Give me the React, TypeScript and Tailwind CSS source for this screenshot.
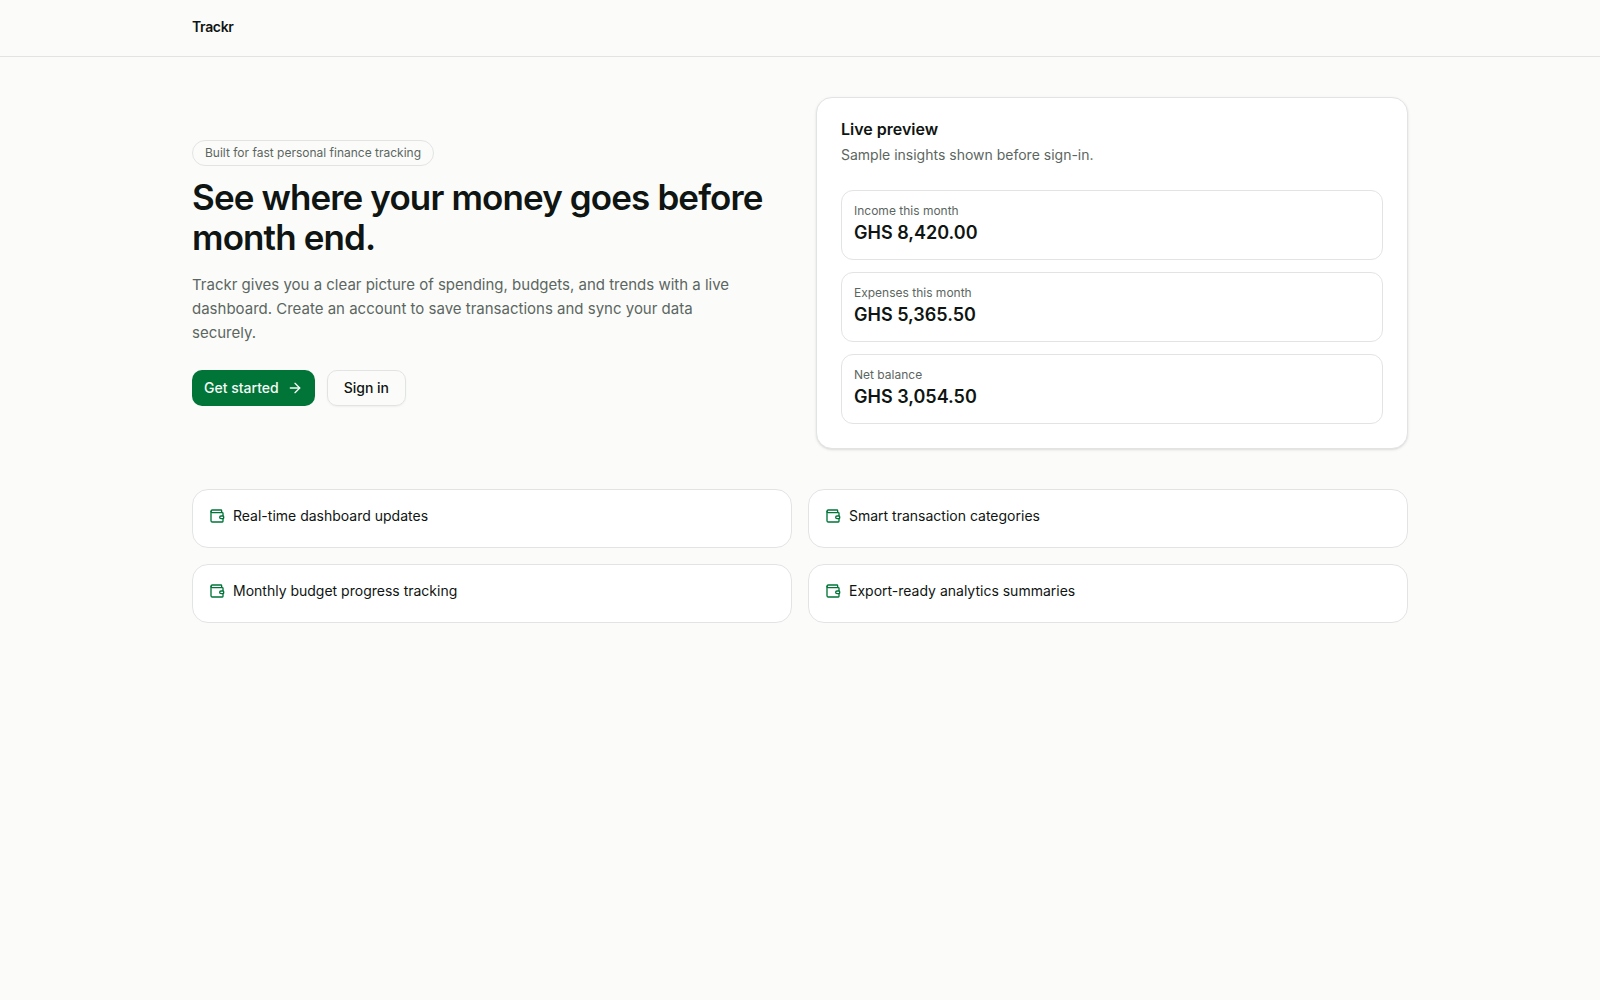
import { ArrowRight, Wallet } from "lucide-react";

const previewStats = [
  { label: "Income this month", value: "GHS 8,420.00" },
  { label: "Expenses this month", value: "GHS 5,365.50" },
  { label: "Net balance", value: "GHS 3,054.50" },
];

const features = [
  "Real-time dashboard updates",
  "Smart transaction categories",
  "Monthly budget progress tracking",
  "Export-ready analytics summaries",
];

export default function App() {
  return (
    <div className="min-h-screen bg-[#fbfcfa] font-['Inter',sans-serif] text-[#0f1512]">
      <header className="border-b border-[#e2e4e3]">
        <div className="mx-auto max-w-7xl px-8 pt-[17px] pb-[19px]">
          <a href="/" className="block w-fit text-sm font-semibold tracking-tight">
            Trackr
          </a>
        </div>
      </header>

      <main className="mx-auto flex max-w-7xl flex-col gap-10 px-8 py-10">
        <section className="grid items-center gap-8 lg:grid-cols-2">
          <div>
            <p className="w-fit rounded-full border border-[#e2e4e3] px-3 py-1 text-xs text-[#5c6661]">
              Built for fast personal finance tracking
            </p>
            <h1 className="mt-[11px] text-[35px] leading-10 font-semibold tracking-tight">
              See where your money goes before month end.
            </h1>
            <p className="mt-4 max-w-[550px] text-[15px] leading-6 text-[#5c6661]">
              Trackr gives you a clear picture of spending, budgets, and trends with a live dashboard. Create an
              account to save transactions and sync your data securely.
            </p>
            <div className="mt-[25px] flex flex-wrap gap-3">
              <button
                type="button"
                className="flex h-9 items-center gap-2 rounded-[10px] bg-[#017438] px-3 text-sm font-medium text-[#f5fbf7]"
              >
                Get started
                <ArrowRight className="size-4" />
              </button>
              <button
                type="button"
                className="h-9 rounded-[10px] border border-[#e2e4e3] px-4 text-sm font-medium shadow-xs"
              >
                Sign in
              </button>
            </div>
          </div>

          <div className="rounded-2xl border border-[#e2e4e3] bg-white px-6 pt-[23px] pb-6 shadow-sm">
            <h2 className="text-base leading-4 font-semibold">Live preview</h2>
            <p className="mt-2 text-sm text-[#5c6661]">Sample insights shown before sign-in.</p>
            <div className="mt-[25px] flex flex-col gap-3">
              {previewStats.map((stat) => (
                <div key={stat.label} className="rounded-xl border border-[#e2e4e3] p-3">
                  <p className="text-xs text-[#5c6661]">{stat.label}</p>
                  <p className="text-lg font-semibold">{stat.value}</p>
                </div>
              ))}
            </div>
          </div>
        </section>

        <section className="grid gap-4 md:grid-cols-2">
          {features.map((feature) => (
            <div key={feature} className="min-h-[59px] rounded-2xl border border-[#e2e4e3] bg-white p-4">
              <p className="flex items-center gap-2 text-sm">
                <Wallet className="size-4 text-[#017438]" />
                {feature}
              </p>
            </div>
          ))}
        </section>
      </main>
    </div>
  );
}
